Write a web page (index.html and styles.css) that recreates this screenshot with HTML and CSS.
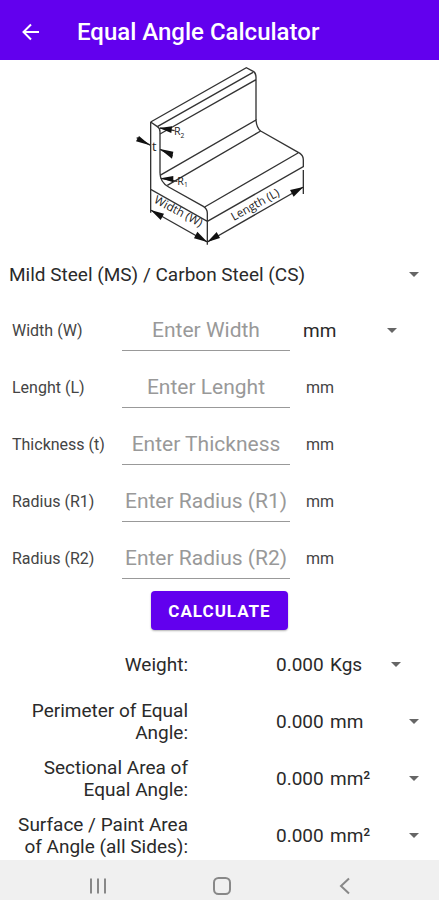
FILE: index.html
```
<!DOCTYPE html>
<html lang="en">
  <head>
    <meta charset="UTF-8" />
    <meta name="viewport" content="width=device-width, initial-scale=1" />
    <title>Equal Angle Calculator</title>
    <link rel="stylesheet" href="styles.css">
  </head>

  <body>
    <header class="app-bar">
      <button class="back" type="button" aria-label="Back">
        <svg width="18" height="18" viewBox="0 0 18 18">
          <path d="M17 9H2M9 1.5L1.5 9L9 16.5" />
        </svg>
      </button>
      <h1>Equal Angle Calculator</h1>
    </header>

    <main>
      <svg class="diagram" viewBox="0 0 540 561" role="img" aria-label="Equal angle dimensions">
        <!-- end profile -->
        <path d="M62 186V388L232 484V460Q232 446 220 439L116 381Q90 366 90 338V216Q90 204 82 200L62 186" />
        <!-- upright leg -->
        <path d="M62 186L349 23L371 35Q378 40 378 52V180M82 200L369 37M90 222L378 59" />
        <!-- bottom leg -->
        <path d="M90 346L378 180Q380 204 392 213L510 280Q520 287 520 300V320L232 484M112 376L392 213M224 441L504 279" />
        <!-- dimension lines -->
        <path d="M62 388V458M232 484V554M520 330V402M62 450L232 546L520 381" />
        <path d="M20 233L62 256M90 268L128 288M90 204L134 212M92 355L142 364" />
        <g class="arrows">
          <path d="M62 450L102 461L92 480Z" />
          <path d="M232 546L192 535L202 515Z" />
          <path d="M232 546L260 516L270 534Z" />
          <path d="M520 381L480 390L491 410Z" />
          <path d="M60 256L18 244L27 228Z" />
          <path d="M90 267L130 275L126 296Z" />
          <path d="M88 204L126 199L124 219Z" />
          <path d="M92 355L130 348L130 367Z" />
        </g>
        <text x="66" y="273" font-size="38">t</text>
        <text x="132" y="225" font-size="32">R<tspan font-size="20" dy="8">2</tspan></text>
        <text x="142" y="374" font-size="32">R<tspan font-size="20" dy="6">1</tspan></text>
        <text transform="translate(70 427) rotate(28)" font-size="35">Width (W)</text>
        <text transform="translate(311 483) rotate(-29)" font-size="35">Length (L)</text>
      </svg>

      <form id="calc">
        <div class="select material">
          <select aria-label="Material">
            <option>Mild Steel (MS) / Carbon Steel (CS)</option>
            <option>Aluminium</option>
          </select>
        </div>

        <div class="field">
          <label for="width">Width (W)</label>
          <input id="width" type="text" inputmode="decimal" placeholder="Enter Width" />
          <div class="select unit-select">
            <select aria-label="Unit">
              <option>mm</option>
              <option>cm</option>
              <option>inch</option>
            </select>
          </div>
        </div>
        <div class="field">
          <label for="length">Lenght (L)</label>
          <input id="length" type="text" inputmode="decimal" placeholder="Enter Lenght" />
          <span class="unit">mm</span>
        </div>
        <div class="field">
          <label for="thickness">Thickness (t)</label>
          <input id="thickness" type="text" inputmode="decimal" placeholder="Enter Thickness" />
          <span class="unit">mm</span>
        </div>
        <div class="field">
          <label for="r1">Radius (R1)</label>
          <input id="r1" type="text" inputmode="decimal" placeholder="Enter Radius (R1)" />
          <span class="unit">mm</span>
        </div>
        <div class="field">
          <label for="r2">Radius (R2)</label>
          <input id="r2" type="text" inputmode="decimal" placeholder="Enter Radius (R2)" />
          <span class="unit">mm</span>
        </div>

        <button class="calculate" type="button">CALCULATE</button>
      </form>

      <section class="results">
        <div class="result">
          <label for="weight">Weight:</label>
          <output id="weight">0.000</output>
          <div class="select short">
            <select aria-label="Weight unit">
              <option>Kgs</option>
              <option>Lbs</option>
            </select>
          </div>
        </div>
        <div class="result">
          <label for="perimeter">Perimeter of Equal Angle:</label>
          <output id="perimeter">0.000</output>
          <div class="select">
            <select aria-label="Perimeter unit">
              <option>mm</option>
              <option>cm</option>
            </select>
          </div>
        </div>
        <div class="result">
          <label for="section">Sectional Area of Equal Angle:</label>
          <output id="section">0.000</output>
          <div class="select">
            <select aria-label="Sectional area unit">
              <option>mm²</option>
              <option>cm²</option>
            </select>
          </div>
        </div>
        <div class="result">
          <label for="surface">Surface / Paint Area of Angle (all Sides):</label>
          <output id="surface">0.000</output>
          <div class="select">
            <select aria-label="Surface area unit">
              <option>mm²</option>
              <option>cm²</option>
            </select>
          </div>
        </div>
      </section>
    </main>

    <nav class="nav-bar">
      <button type="button" aria-label="Recent apps">
        <svg width="20" height="20" viewBox="0 0 20 20"><path d="M3 2.5V17.5M10 2.5V17.5M17 2.5V17.5" /></svg>
      </button>
      <button type="button" aria-label="Home">
        <svg width="20" height="20" viewBox="0 0 20 20"><rect x="2" y="2" width="16" height="16" rx="4.5" /></svg>
      </button>
      <button type="button" aria-label="Back">
        <svg width="20" height="20" viewBox="0 0 20 20"><path d="M14 2.5L6 10L14 17.5" /></svg>
      </button>
    </nav>
  </body>
</html>
```
FILE: styles.css
```
* {
  box-sizing: border-box;
}

body {
  margin: 0;
  min-height: 100vh;
  display: flex;
  flex-direction: column;
  background-color: #fff;
  color: #2a2a2a;
  font-family: Roboto, sans-serif;
  font-size: 19px;
}

button,
input,
select {
  font: inherit;
  color: inherit;
}

button {
  border: none;
  cursor: pointer;
}

.app-bar {
  display: flex;
  align-items: center;
  height: 60px;
  padding: 3px 20px 0;
  background-color: #6200ee;
  color: #fff;
}

.app-bar h1 {
  margin: 0 0 0 35px;
  font-size: 24px;
  font-weight: 500;
}

.back {
  display: flex;
  padding: 0;
  background: none;
}

.back svg {
  margin: 0 2px;
  fill: none;
  stroke: #fff;
  stroke-width: 2;
}

main {
  flex: 1;
}

.diagram {
  display: block;
  width: 180px;
  height: 187px;
  margin: 0 auto;
  fill: none;
  stroke: #333;
  stroke-width: 4;
}

.diagram .arrows {
  fill: #111;
  stroke: none;
}

.diagram text {
  fill: #222;
  stroke: none;
  font-family: "Open Sans", sans-serif;
}

.select {
  position: relative;
}

.select select {
  width: 100%;
  padding: 0;
  border: none;
  background: none;
  appearance: none;
}

.select::after {
  content: "";
  position: absolute;
  top: 50%;
  right: 0;
  margin-top: -3px;
  border: 5px solid transparent;
  border-top-color: #666;
  border-bottom: none;
  pointer-events: none;
}

.material {
  display: flex;
  height: 55px;
  margin: 0 20px 0 9px;
}

.field {
  display: grid;
  grid-template-columns: 110fr 168fr 149fr;
  align-items: center;
  height: 57px;
  padding-left: 12px;
}

.field label,
.unit {
  font-size: 16px;
  color: #444;
}

.field input {
  width: 100%;
  height: 40px;
  padding: 0;
  border: none;
  border-bottom: 1px solid #999;
  background: none;
  font-size: 21px;
  text-align: center;
  outline: none;
}

.field input::placeholder {
  color: #999;
}

.unit {
  margin-left: 16px;
}

.unit-select {
  margin: 0 42px 0 13px;
}

.calculate {
  display: block;
  height: 39px;
  margin: 4px auto 12px;
  padding: 0 17px;
  border-radius: 4px;
  background-color: #6200ee;
  color: #fff;
  font-size: 17px;
  font-weight: 700;
  letter-spacing: 1px;
  box-shadow: 0 1px 2px rgba(0, 0, 0, 0.3);
}

.results {
  display: flex;
  flex-direction: column;
  gap: 13px;
  padding: 1px 20px 2px 16px;
}

.result {
  display: grid;
  grid-template-columns: 172fr 88fr 54fr 89fr;
  align-items: center;
  min-height: 44px;
  line-height: 22px;
}

.result label {
  text-align: right;
}

.result output {
  grid-column: 3;
}

.short {
  margin-right: 18px;
}

.nav-bar {
  display: flex;
  justify-content: space-between;
  align-items: center;
  height: 40px;
  padding: 12px 84px 0 88px;
  background-color: #f0f0f0;
}

.nav-bar button {
  display: flex;
  padding: 0;
  background: none;
}

.nav-bar svg {
  fill: none;
  stroke: #888;
  stroke-width: 2;
}
```
